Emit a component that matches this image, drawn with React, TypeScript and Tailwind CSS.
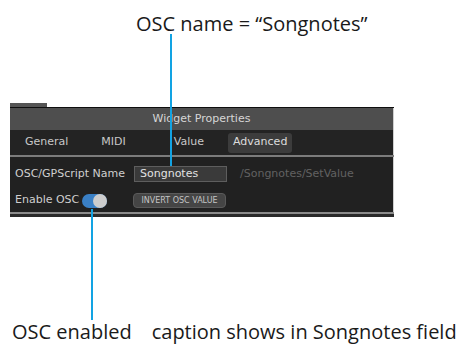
import { FC } from "react";

const panelFont = { fontFamily: '"DejaVu Sans", "Liberation Sans", sans-serif' };
const captionFont = { fontFamily: '"Open Sans", "Liberation Sans", sans-serif' };

const App: FC = () => {
  return (
    <div className="relative w-[458px] h-[345px] bg-white overflow-hidden">
      <div style={captionFont} className="pt-[12px] pl-[136px] text-[20px] leading-[24px] text-[#1a1a1a]">
        OSC name = “Songnotes”
      </div>

      <div className="ml-[10px] mt-[67px] w-[384px]" style={panelFont}>
        <div className="flex h-[4px]">
          <div className="w-[37px] bg-[#555555]" />
        </div>
        <div className="h-[1px] bg-[#0e0e0e]" />
        <div className="h-[22px] bg-[#4e4e4e] border-r border-[#cfcfcf] flex items-center justify-center text-[11px] text-[#d6d6d6]">
          Widget Properties
        </div>
        <div className="h-[25px] bg-[#232323] border-r border-[#cfcfcf] flex items-center text-[11px] text-[#c8c8c8]">
          <span className="ml-[15px]">General</span>
          <span className="ml-[33px]">MIDI</span>
          <span className="ml-[48px]">Value</span>
          <span className="ml-[24px] h-[20px] px-[5px] flex items-center rounded-[3px] bg-[#3c3c3c] text-[#dcdcdc]">Advanced</span>
        </div>
        <div className="h-[2px] bg-[#7c7c7c]" />
        <div className="h-[55px] bg-[#212121] border-r border-[#cfcfcf] flex flex-col pl-[5px] text-[11px] text-[#cfcfcf]">
          <div className="flex items-center mt-[9px] h-[16px]">
            <span className="w-[119px]">OSC/GPScript Name</span>
            <span className="w-[93px] h-[16px] flex items-center pl-[5px] bg-[#3a3a3a] border border-[#5e5e5e] text-[#e2e2e2]">Songnotes</span>
            <span className="ml-[13px] text-[#626262]">/Songnotes/SetValue</span>
          </div>
          <div className="flex items-center mt-[11px] h-[15px]">
            <span className="w-[67px]">Enable OSC</span>
            <span className="relative w-[25px] h-[14px] rounded-full bg-[#3a80c6]">
              <span className="absolute right-0 top-0 w-[14px] h-[14px] rounded-full bg-[#cdcdcd]" />
            </span>
            <span className="ml-[26px] w-[93px] h-[15px] flex items-center justify-center rounded-[4px] bg-[#454545] border border-[#5a5a5a] text-[8px] text-[#c4c4c4]">
              INVERT OSC VALUE
            </span>
          </div>
        </div>
        <div className="h-[2px] bg-[#8c8c8c]" />
        <div className="h-[3px] bg-[#2a2a2a]" />
      </div>

      <div style={captionFont} className="flex mt-[103px] pl-[12px] text-[20px] leading-[24px] text-[#1a1a1a]">
        <span>OSC enabled</span>
        <span className="ml-[20px]">caption shows in Songnotes field</span>
      </div>

      <div className="absolute left-[170px] top-[34px] w-[2px] h-[132px] bg-[#12a3e3]" />
      <div className="absolute left-[91px] top-[209px] w-[2px] h-[111px] bg-[#12a3e3]" />
    </div>
  );
};

export default App;
